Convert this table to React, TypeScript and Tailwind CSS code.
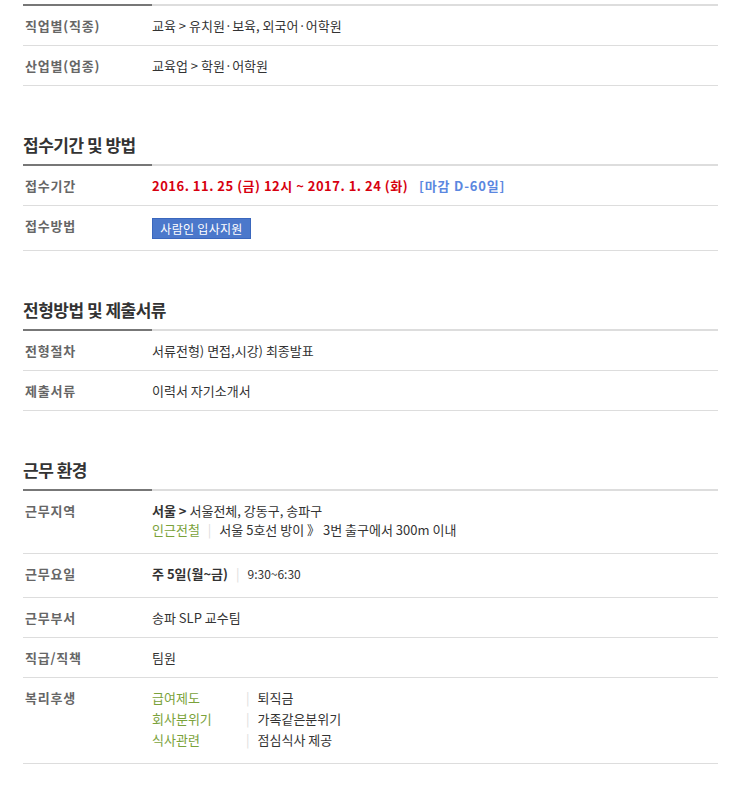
const font = { fontFamily: '"Noto Sans CJK KR", "Noto Sans", sans-serif' };

function Row({
  label,
  children,
  className = "h-[40px] pt-[12px]",
}: {
  label: string;
  children: React.ReactNode;
  className?: string;
}) {
  return (
    <div className={`flex border-b border-[#dddddd] ${className}`}>
      <div className="w-[129px] shrink-0 pl-[2px] text-[13px] leading-[15px] font-bold tracking-[0.8px] text-[#666666]">
        {label}
      </div>
      <div className="flex-1 text-[13px] leading-[15px] text-[#333333]">{children}</div>
    </div>
  );
}

function SectionTop() {
  return (
    <div className="flex h-[2px]">
      <div className="w-[129px] bg-[#777777]" />
      <div className="flex-1 bg-[#dddddd]" />
    </div>
  );
}

function Heading({ title }: { title: string }) {
  return (
    <>
      <h3 className="mt-[47px] pb-[7px] text-[17px] leading-[24px] font-bold text-[#333333] tracking-[-0.5px]">
        {title}
      </h3>
      <SectionTop />
    </>
  );
}

const Bar = () => <span className="mx-[8px] text-[#dddddd]">|</span>;

export default function App() {
  return (
    <div className="bg-white min-h-[794px] w-[745px]" style={font}>
      <div className="ml-[23px] w-[695px] pt-[4px]">
        <SectionTop />
        <Row label="직업별(직종)">교육 &gt; 유치원·보육, 외국어·어학원</Row>
        <Row label="산업별(업종)">교육업 &gt; 학원·어학원</Row>

        <Heading title="접수기간 및 방법" />
        <Row label="접수기간">
          <span className="font-bold tracking-[0.5px] text-[#d7000f]">
            2016. 11. 25 (금) 12시 ~ 2017. 1. 24 (화)
          </span>
          <span className="ml-[11px] font-bold tracking-[0.8px] text-[#5b87e0]">[마감 D-60일]</span>
        </Row>
        <Row label="접수방법" className="h-[45px] pt-[12px]">
          <div className="flex h-[21px] w-[99px] items-center justify-center border border-[#3a67bd] bg-[#4b78cb] text-[12px] leading-[15px] tracking-[0.3px] text-white">
            사람인 입사지원
          </div>
        </Row>

        <Heading title="전형방법 및 제출서류" />
        <Row label="전형절차">서류전형) 면접,시강) 최종발표</Row>
        <Row label="제출서류">이력서 자기소개서</Row>

        <Heading title="근무 환경" />
        <Row label="근무지역" className="h-[63px] pt-[12px]">
          <div className="-mt-[2px] leading-[19px]">
            <div>
              <span className="font-bold">서울 &gt;</span> 서울전체, 강동구, 송파구
            </div>
            <div>
              <span className="text-[#7aa23a]">인근전철</span>
              <Bar />
              서울 5호선 방이 》 3번 출구에서 300m 이내
            </div>
          </div>
        </Row>
        <Row label="근무요일" className="h-[44px] pt-[12px]">
          <span className="font-bold">주 5일(월~금)</span>
          <Bar />
          <span className="text-[12px]">9:30~6:30</span>
        </Row>
        <Row label="근무부서">송파 SLP 교수팀</Row>
        <Row label="직급/직책">팀원</Row>
        <Row label="복리후생" className="h-[86px] pt-[12px]">
          <div className="-mt-[3px] grid grid-cols-[94px_1fr] leading-[21px]">
            <span className="text-[#7aa23a]">급여제도</span>
            <span>
              <span className="mr-[8px] text-[#dddddd]">|</span>퇴직금
            </span>
            <span className="text-[#7aa23a]">회사분위기</span>
            <span>
              <span className="mr-[8px] text-[#dddddd]">|</span>가족같은분위기
            </span>
            <span className="text-[#7aa23a]">식사관련</span>
            <span>
              <span className="mr-[8px] text-[#dddddd]">|</span>점심식사 제공
            </span>
          </div>
        </Row>
      </div>
    </div>
  );
}
